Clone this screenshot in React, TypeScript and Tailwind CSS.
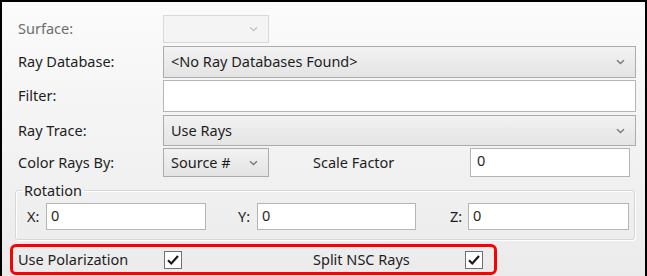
import React from "react";

const Chevron = ({ light }: { light?: boolean }) => (
  <svg width="9" height="6" viewBox="0 0 9 6" className="shrink-0">
    <path d="M1 1.2 L4.5 4.5 L8 1.2" fill="none" stroke={light ? "#c4c4c4" : "#7a7a7a"} strokeWidth="1.4" />
  </svg>
);

const Check = () => (
  <div className="w-[18px] h-[18px] border border-[#707070] bg-white flex items-center justify-center shrink-0">
    <svg width="14" height="12" viewBox="0 0 14 12">
      <path d="M2 6.2 L5.3 9.5 L12 2" fill="none" stroke="#1a1a1a" strokeWidth="2.2" />
    </svg>
  </div>
);

export default function App() {
  const font = { fontFamily: '"Segoe UI", "Noto Sans", "Open Sans", sans-serif' };
  return (
    <div
      className="w-[647px] h-[276px] overflow-hidden border-t-2 border-l-2 border-r-2 border-black bg-gradient-to-b from-[#fbfbfb] to-[#ebebeb] text-[14.5px] text-[#1e1e1e]"
      style={font}
    >
      <div className="flex flex-col pl-[16px] pr-[9px] pt-[13px]">
        {/* Surface */}
        <div className="flex items-center h-[28px]">
          <div className="w-[145px] text-[#6e6e6e]">Surface:</div>
          <div className="w-[106px] h-[28px] border border-[#d9d9d9] bg-[#f4f4f4] flex items-center justify-end pr-[10px]">
            <Chevron light />
          </div>
        </div>
        {/* Ray Database */}
        <div className="flex items-center h-[32px] mt-[3px]">
          <div className="w-[145px]">Ray Database:</div>
          <div className="flex-1 h-[32px] border border-[#acacac] bg-gradient-to-b from-[#f2f2f2] to-[#e4e4e4] flex items-center justify-between pl-[7px] pr-[10px]">
            <span>&lt;No Ray Databases Found&gt;</span>
            <Chevron />
          </div>
        </div>
        {/* Filter */}
        <div className="flex items-center h-[32px] mt-[2px]">
          <div className="w-[145px]">Filter:</div>
          <div className="flex-1 h-[32px] border border-[#b5b5b5] bg-white" />
        </div>
        {/* Ray Trace */}
        <div className="flex items-center h-[31px] mt-[3px]">
          <div className="w-[145px]">Ray Trace:</div>
          <div className="flex-1 h-[31px] border border-[#acacac] bg-gradient-to-b from-[#f2f2f2] to-[#e4e4e4] flex items-center justify-between pl-[7px] pr-[10px]">
            <span>Use Rays</span>
            <Chevron />
          </div>
        </div>
        {/* Color Rays By */}
        <div className="flex items-center h-[29px] mt-[2px]">
          <div className="w-[145px]">Color Rays By:</div>
          <div className="w-[106px] h-[29px] border border-[#acacac] bg-gradient-to-b from-[#f2f2f2] to-[#e4e4e4] flex items-center justify-between pl-[7px] pr-[10px]">
            <span>Source #</span>
            <Chevron />
          </div>
          <div className="w-[201px] pl-[44px]">Scale Factor</div>
          <div className="w-[160px] h-[29px] border border-[#b5b5b5] bg-white pl-[6px] leading-[22px]">0</div>
        </div>
        {/* Rotation */}
        <fieldset className="ml-[-3px] mr-[2px] mt-[5px] h-[58px] border border-[#d3d8dc] rounded-[3px] shadow-[inset_1px_1px_0_#ffffff,1px_1px_0_#ffffff] pl-[11px] pr-[5px]">
          <legend className="px-[2px] ml-[-5px] leading-[16px]">Rotation</legend>
          <div className="flex items-center h-[27px] mt-[5px]">
            <div className="w-[19px]">X:</div>
            <div className="w-[160px] h-[27px] border border-[#b5b5b5] bg-white pl-[4px] leading-[22px]">0</div>
            <div className="w-[51px] pl-[32px]">Y:</div>
            <div className="w-[159px] h-[27px] border border-[#b5b5b5] bg-white pl-[4px] leading-[22px]">0</div>
            <div className="w-[52px] pl-[34px]">Z:</div>
            <div className="w-[161px] h-[27px] border border-[#b5b5b5] bg-white pl-[4px] leading-[22px]">0</div>
          </div>
        </fieldset>
        {/* Checkboxes */}
        <div className="ml-[-8px] mt-[4px] w-[487px] h-[31px] shrink-0 border-[3px] border-[#ff0000] rounded-[6px] flex items-center pl-[5px]">
          <div className="w-[146px]">Use Polarization</div>
          <Check />
          <div className="w-[283px] pl-[131px]">Split NSC Rays</div>
          <Check />
        </div>
      </div>
    </div>
  );
}
